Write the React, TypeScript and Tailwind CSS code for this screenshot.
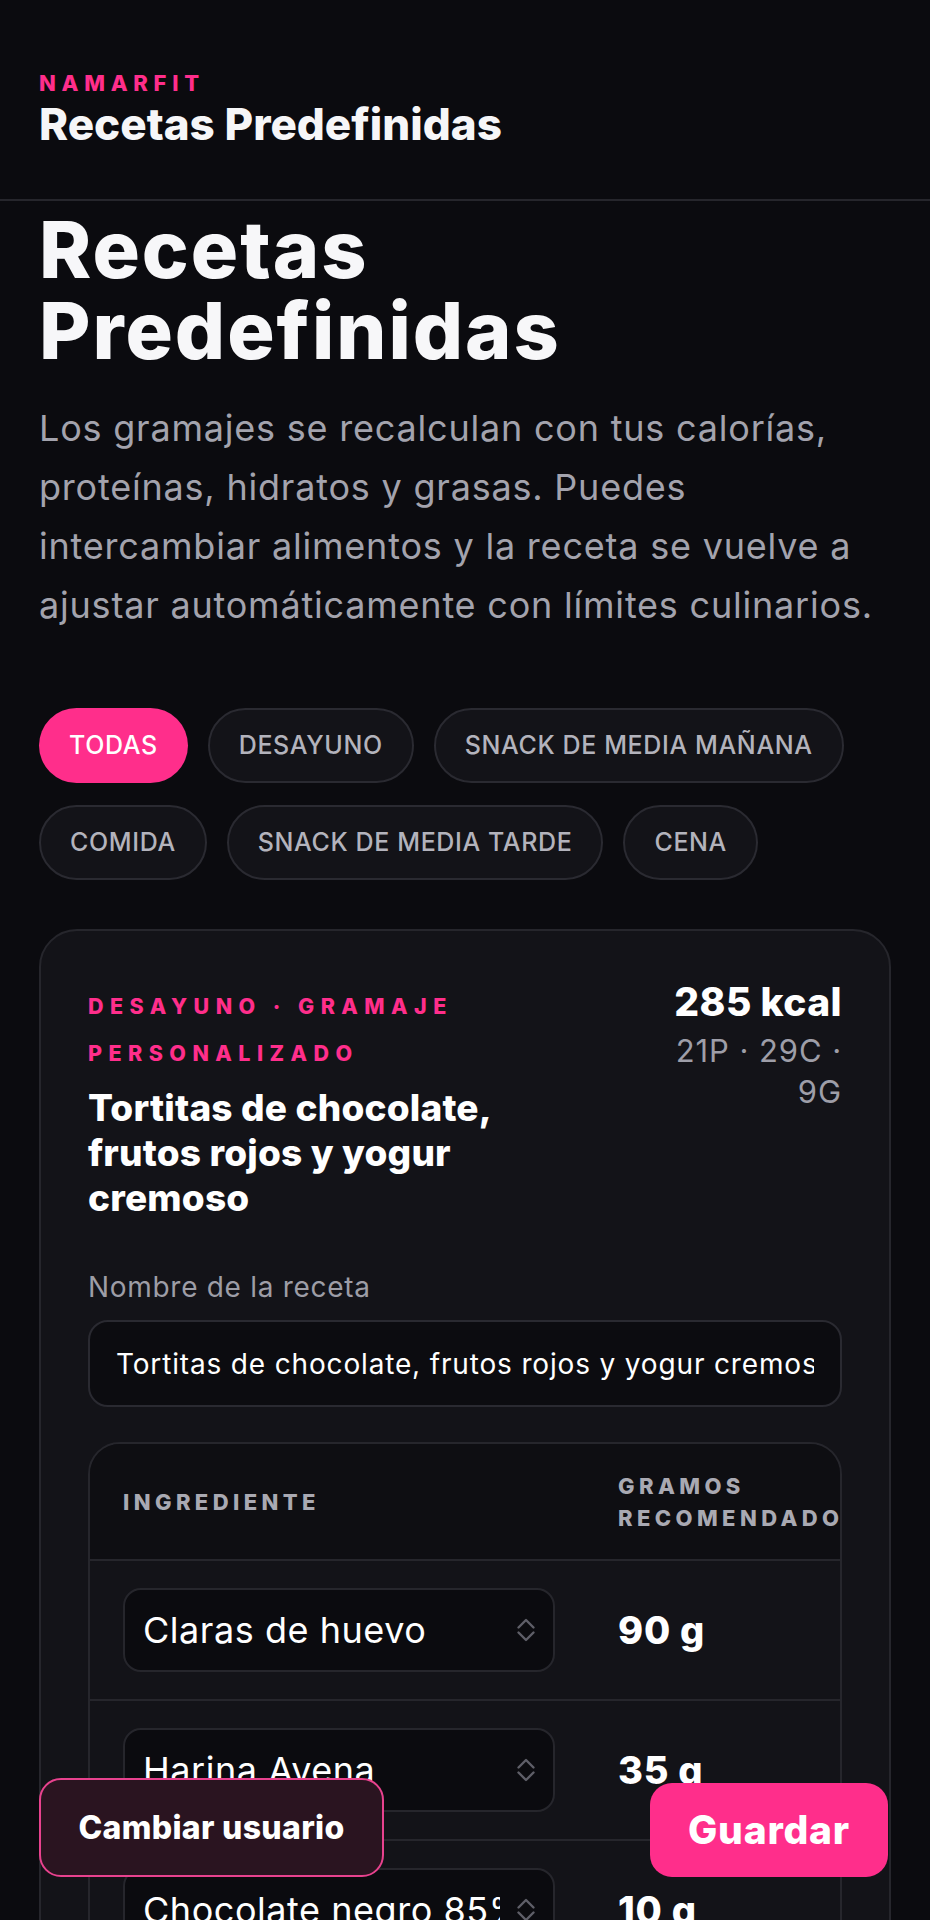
import React from "react";

const FONT = { fontFamily: "Inter, 'Noto Sans', 'Liberation Sans', sans-serif" } as const;

function Chevrons() {
  return (
    <svg width="20" height="28" viewBox="0 0 20 28" fill="none" stroke="#5f5f68" strokeWidth="2.4" strokeLinecap="round" strokeLinejoin="round" className="shrink-0">
      <path d="M2.5 11.5 L10 4 L17.5 11.5" />
      <path d="M2.5 16.5 L10 24 L17.5 16.5" />
    </svg>
  );
}

const chips = [
  { label: "TODAS", active: true },
  { label: "DESAYUNO" },
  { label: "SNACK DE MEDIA MAÑANA" },
  { label: "COMIDA" },
  { label: "SNACK DE MEDIA TARDE" },
  { label: "CENA" },
];

const rows = [
  { name: "Claras de huevo", grams: "90 g" },
  { name: "Harina Avena", grams: "35 g" },
  { name: "Chocolate negro 85%", grams: "10 g" },
  { name: "Frutos rojos", grams: "80 g" },
];

export default function App() {
  return (
    <div style={FONT} className="relative h-[1920px] w-[930px] overflow-hidden bg-[#0b0b0f] text-white">
      <header className="h-[201px] border-b-2 border-[#26262c] px-[39px] pt-[69px]">
        <div className="text-[22px] font-extrabold leading-[28px] tracking-[0.26em] text-[#ff2e8b]">NAMARFIT</div>
        <div className="mt-[1px] text-[44px] font-extrabold leading-[52px] text-[#f6f6f8]">Recetas Predefinidas</div>
      </header>

      <main className="px-[39px] pt-[8px]">
        <h1 className="text-[79px] font-extrabold leading-[81px] tracking-[0.025em] text-[#f7f7f9]">
          Recetas
          <br />
          Predefinidas
        </h1>
        <p className="mt-[28px] w-[858px] text-[36px] leading-[59px] tracking-[0.022em] text-[#a3a3ad]">
          Los gramajes se recalculan con tus calorías, proteínas, hidratos y grasas. Puedes intercambiar alimentos y la receta se vuelve a ajustar automáticamente con límites culinarios.
        </p>

        <div className="mt-[73px] flex flex-wrap gap-x-[20px] gap-y-[22px]">
          {chips.map((c) =>
            c.active ? (
              <div key={c.label} className="flex h-[75px] items-center rounded-full bg-[#ff2e8b] px-[30px] text-[25px] font-medium tracking-[0.025em] text-white">
                {c.label}
              </div>
            ) : (
              <div key={c.label} className="flex h-[75px] items-center rounded-full border-2 border-[#2a2a31] bg-[#131318] px-[29px] text-[25px] font-medium tracking-[0.025em] text-[#b3b3bc]">
                {c.label}
              </div>
            )
          )}
        </div>

        <section className="mt-[49px] rounded-[38px] border-2 border-[#26262c] bg-[#131318] px-[47px] pt-[52px] pb-[60px]">
          <div className="flex items-start justify-between">
            <div className="w-[470px]">
              <div className="text-[21.5px] font-extrabold leading-[47px] tracking-[0.3em] text-[#ff2e8b]">
                DESAYUNO · GRAMAJE PERSONALIZADO
              </div>
              <div className="mt-[8px] w-[440px] text-[37px] font-extrabold leading-[45px] tracking-[0.005em] text-white">
                Tortitas de chocolate, frutos rojos y yogur cremoso
              </div>
            </div>
            <div className="-mt-[2px] w-[176px] text-right">
              <div className="whitespace-nowrap text-[39px] font-extrabold leading-[42px] tracking-[0.01em] text-white">285 kcal</div>
              <div className="mt-[7px] text-[31px] leading-[41px] tracking-[0.03em] text-[#9e9ea8]">21P · 29C · 9G</div>
            </div>
          </div>

          <label className="mt-[51px] block text-[28px] leading-[32px] tracking-[0.025em] text-[#9d9da6]">Nombre de la receta</label>
          <input
            readOnly
            value="Tortitas de chocolate, frutos rojos y yogur cremoso"
            className="mt-[17px] block h-[87px] w-full rounded-[20px] border-2 border-[#2a2a31] bg-[#0c0c10] px-[26px] text-[28px] tracking-[0.03em] text-white outline-none"
          />

          <div className="mt-[35px] overflow-hidden rounded-[32px] border-2 border-[#26262c]">
            <div className="flex h-[115px] w-[1100px] items-center bg-[#0e0e12]">
              <div className="w-[497px] pl-[33px] text-[22px] font-extrabold leading-[32px] tracking-[0.2em] text-[#a9a9b2]">INGREDIENTE</div>
              <div className="w-[320px] pl-[31px] text-[22px] font-extrabold leading-[32px] tracking-[0.2em] text-[#a9a9b2]">
                GRAMOS
                <br />
                RECOMENDADOS
              </div>
              <div className="w-[260px] pl-[27px] text-[22px] font-extrabold leading-[32px] tracking-[0.2em] text-[#a9a9b2]">CAMBIAR</div>
            </div>
            {rows.map((r) => (
              <div key={r.name} className="flex h-[140px] w-[1100px] items-center border-t-2 border-[#26262c]">
                <div className="w-[497px] pl-[33px]">
                  <div className="flex h-[84px] w-[432px] items-center rounded-[18px] border-2 border-[#26262c] bg-[#0b0b0f] pl-[18px] pr-[17px]">
                    <div className="mr-[16px] min-w-0 flex-1 overflow-hidden whitespace-nowrap text-[36px] tracking-[0.015em] text-white">{r.name}</div>
                    <Chevrons />
                  </div>
                </div>
                <div className="w-[320px] pl-[31px] text-[38px] font-extrabold tracking-[0.02em] text-white">{r.grams}</div>
              </div>
            ))}
          </div>
        </section>
      </main>

      <button className="absolute bottom-[43px] left-[39px] flex h-[99px] w-[345px] items-center justify-center rounded-[22px] border-2 border-[#e8428e] bg-[#2a1420] text-[32px] font-extrabold tracking-[0.01em] text-white">
        Cambiar usuario
      </button>
      <button className="absolute bottom-[43px] right-[42px] flex h-[94px] w-[238px] items-center justify-center rounded-[22px] bg-[#ff2e8b] text-[39px] font-extrabold tracking-[0.02em] text-white">
        Guardar
      </button>
    </div>
  );
}
